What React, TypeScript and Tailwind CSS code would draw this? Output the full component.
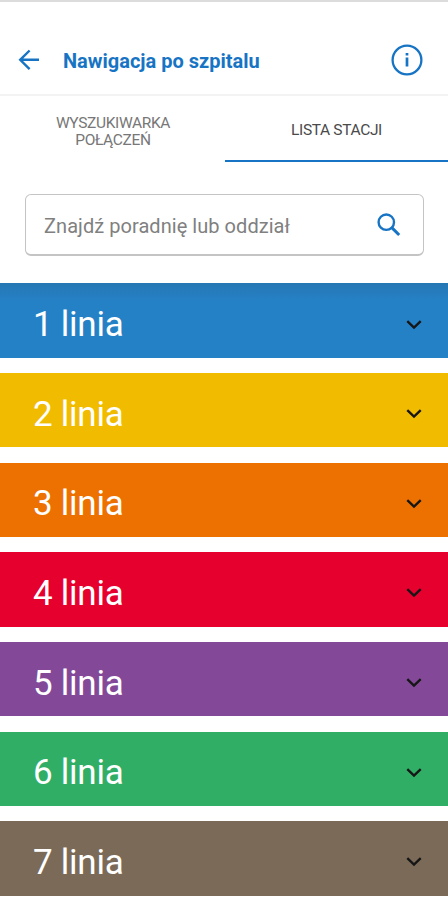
import React from "react";

const LINES = [
  { label: "1 linia", bg: "bg-[#2581c6]" },
  { label: "2 linia", bg: "bg-[#f1bc00]" },
  { label: "3 linia", bg: "bg-[#ed7100]" },
  { label: "4 linia", bg: "bg-[#e6002e]" },
  { label: "5 linia", bg: "bg-[#834998]" },
  { label: "6 linia", bg: "bg-[#31ae66]" },
  { label: "7 linia", bg: "bg-[#7b6a58]" },
];

function Header() {
  return (
    <header className="flex h-24 items-center border-t-2 border-b-2 border-t-[#dcdcdc] border-b-[#f3f3f3] pt-6 pr-[25px] pl-[18px]">
      <button aria-label="Wstecz" className="text-[#1774c4]">
        <svg width="22" height="22" viewBox="0 0 22 22" fill="none" stroke="currentColor" strokeWidth="2.4">
          <path d="M21 10.8H2.2M11.6 1.5L2.2 10.8l9.4 9.4" />
        </svg>
      </button>
      <h1 className="ml-[23px] pt-[1.5px] text-[20px] leading-6 font-bold whitespace-nowrap text-[#1774c4]">
        Nawigacja po szpitalu
      </h1>
      <button aria-label="Informacje" className="ml-auto text-[#1774c4]">
        <svg width="32" height="32" viewBox="0 0 32 32" fill="none" stroke="currentColor">
          <circle cx="16" cy="16" r="14.4" strokeWidth="2.3" />
          <path d="M16 13.6V22.6M16 9V11.4" strokeWidth="2.7" />
        </svg>
      </button>
    </header>
  );
}

function Tabs() {
  return (
    <nav className="grid h-[66px] grid-cols-2 text-[15.5px] leading-[17.5px] tracking-[-0.35px]">
      <button className="flex flex-col items-center justify-center pt-1.5 pl-0.5 text-[#777777]">
        <span>WYSZUKIWARKA</span>
        <span>POŁĄCZEŃ</span>
      </button>
      <button className="ml-px flex items-center justify-center border-b-2 border-[#1774c4] pt-1.5 text-[#4a4a4a]">
        <span>LISTA STACJI</span>
      </button>
    </nav>
  );
}

function SearchBox() {
  return (
    <div className="mr-6 ml-[25px] mt-8 flex h-[62px] items-center justify-between rounded-[6px] border border-b-2 border-[#c4c4c4] pr-[22px] pl-[18px]">
      <span className="pt-[3px] text-[20px] tracking-[0.05px] whitespace-nowrap text-[#808080]">
        Znajdź poradnię lub oddział
      </span>
      <svg className="text-[#1774c4]" width="24" height="24" viewBox="0 0 24 24" fill="none" stroke="currentColor">
        <circle cx="9.3" cy="9.2" r="7.7" strokeWidth="2.4" />
        <path d="M14.8 14.6L22.2 22" strokeWidth="3" />
      </svg>
    </div>
  );
}

export default function App() {
  return (
    <div className="h-[900px] w-[448px] overflow-hidden bg-white font-['Roboto',sans-serif]">
      <Header />
      <Tabs />
      <SearchBox />
      <main className="mt-[27.4px] flex flex-col gap-[15.3px]">
        {LINES.map((line) => (
          <button
            key={line.label}
            className={`flex h-[74.35px] w-full items-center justify-between pt-2 pr-[26px] pl-[33px] ${line.bg} first:bg-linear-to-b first:from-[#2678b4] first:to-[#2581c6] first:to-25%`}
          >
            <span className="pt-px text-[35px] leading-10 tracking-[-0.25px] text-white">{line.label}</span>
            <svg width="16" height="10" viewBox="0 0 16 10" fill="none" stroke="#161616" strokeWidth="2.4">
              <path d="M1.3 1.2L8 7.5l6.7-6.3" />
            </svg>
          </button>
        ))}
      </main>
    </div>
  );
}
